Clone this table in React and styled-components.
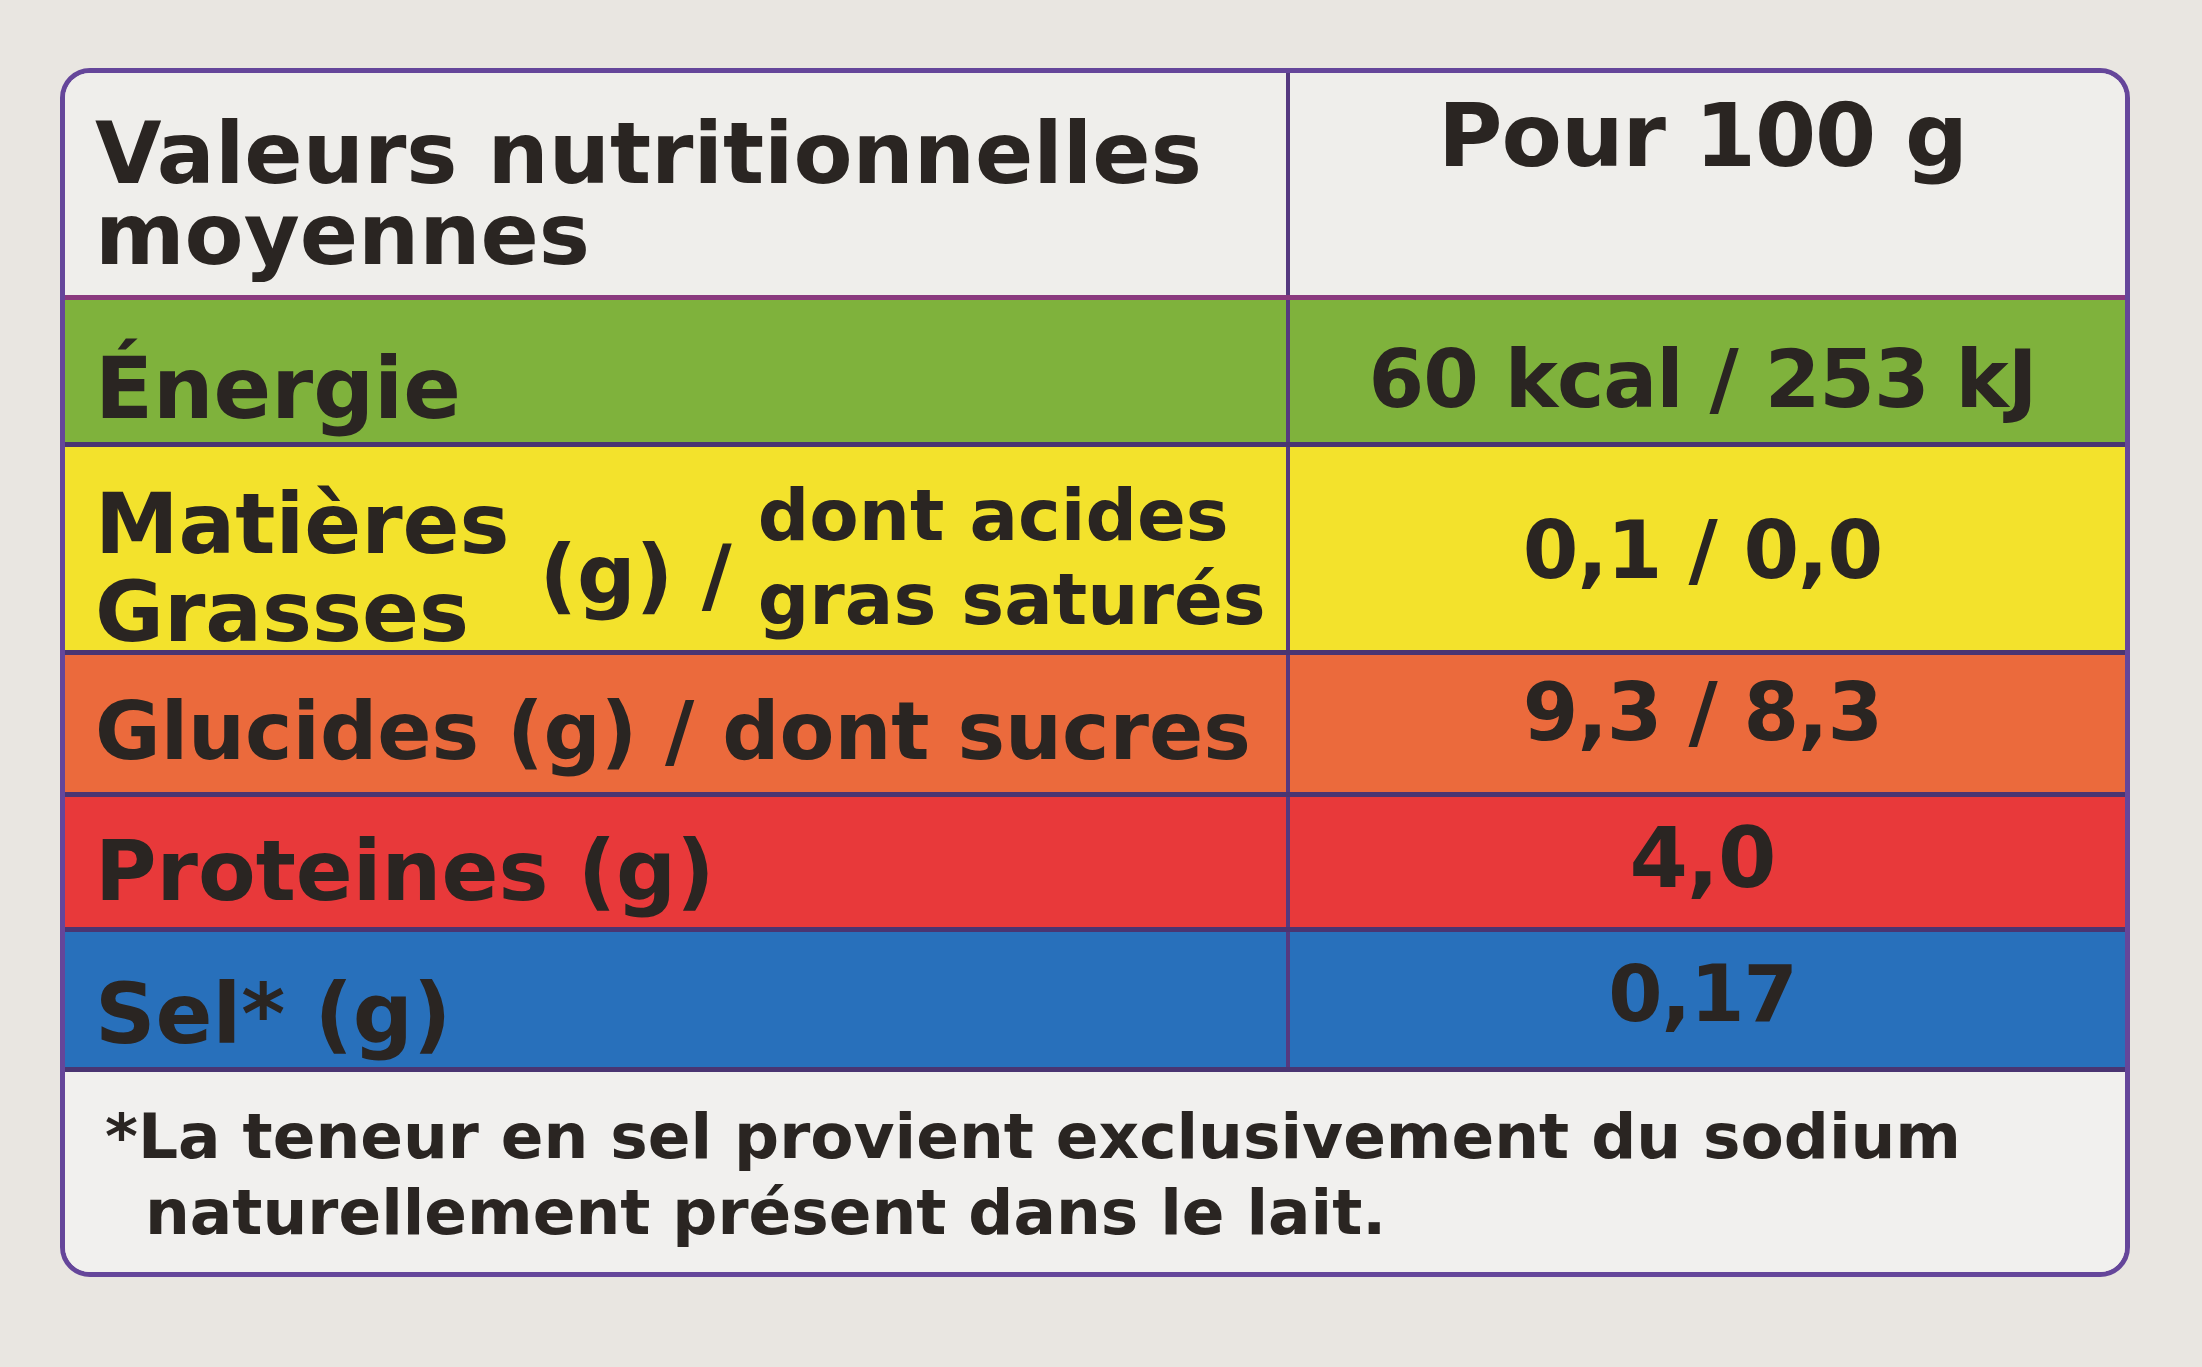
import React from "react";
import styled, { createGlobalStyle } from "styled-components";

const Global = createGlobalStyle`
  html, body { margin: 0; padding: 0; background: #e9e6e1; }
  body { font-family: "DejaVu Sans", "Open Sans", sans-serif; color: #2a2522; }
`;

const Page = styled.div`
  width: 2202px;
  height: 1367px;
  box-sizing: border-box;
  padding: 68px 0 0 60px;
  background: #e9e6e1;
`;

const Table = styled.div`
  width: 2070px;
  box-sizing: border-box;
  border: 5px solid #65469a;
  border-radius: 30px;
  overflow: hidden;
  display: flex;
  flex-direction: column;
  background: #efeeeb;
`;

const Row = styled.div`
  display: grid;
  grid-template-columns: 1225px 1fr;
  height: ${p => p.$h}px;
  box-sizing: border-box;
  background: ${p => p.$bg};
  border-top: ${p => (p.$first ? "none" : `5px solid ${p.$line || "#4a3572"}`)};
`;

const NoteRow = styled.div`
  height: ${p => p.$h}px;
  box-sizing: border-box;
  background: ${p => p.$bg};
  border-top: 5px solid #4a3572;
`;

const Label = styled.div`
  display: flex;
  align-items: flex-start;
  box-sizing: border-box;
  padding: ${p => p.$pad || 0}px 0 0 30px;
  border-right: 4px solid #55397f;
  font-weight: 700;
  font-size: ${p => p.$fs || 84}px;
  line-height: ${p => (p.$lh ? `${p.$lh}px` : 1)};
  white-space: nowrap;
`;

const Value = styled.div`
  display: flex;
  align-items: flex-start;
  justify-content: center;
  box-sizing: border-box;
  padding: ${p => p.$pad || 0}px 10px 0 0;
  font-weight: 700;
  font-size: ${p => p.$fs || 80}px;
  line-height: 1;
  letter-spacing: -1px;
  white-space: nowrap;
`;

const Stack = styled.div`
  display: flex;
  flex-direction: column;
  margin-top: ${p => p.$top}px;
  line-height: ${p => p.$lh}px;
  font-size: ${p => p.$fs}px;
`;

const Unit = styled.span`
  margin: ${p => p.$top}px 26px 0 30px;
  font-size: 82px;
  line-height: 1;
`;

const Footnote = styled.div`
  padding: 27px 40px 0 40px;
  font-weight: 700;
  font-size: 63px;
  line-height: 76px;
`;

const FootLine = styled.div`
  padding-left: ${p => p.$indent || 0}px;
  white-space: nowrap;
`;

export default function App() {
  return (
    <>
      <Global />
      <Page>
        <Table>
          <Row $first $h={222} $bg="#efeeeb">
            <Label $pad={40} $fs={86} $lh={81}>
              <span>
                Valeurs nutritionnelles
                <br />
                moyennes
              </span>
            </Label>
            <Value $pad={19} $fs={88}>Pour 100 g</Value>
          </Row>
          <Row $h={147} $bg="#7fb23c" $line="#8a3a7e">
            <Label $pad={46} $fs={85}>Énergie</Label>
            <Value $pad={40} $fs={80}>60 kcal / 253 kJ</Value>
          </Row>
          <Row $h={208} $bg="#f3e22c">
            <Label>
              <Stack $top={33} $lh={88} $fs={84}>
                <span>Matières</span>
                <span>Grasses</span>
              </Stack>
              <Unit $top={87}>(g) /</Unit>
              <Stack $top={26} $lh={84} $fs={72}>
                <span>dont acides</span>
                <span>gras saturés</span>
              </Stack>
            </Label>
            <Value $pad={64} $fs={80}>0,1 / 0,0</Value>
          </Row>
          <Row $h={142} $bg="#eb6a3c">
            <Label $pad={37} $fs={80}>Glucides (g) / dont sucres</Label>
            <Value $pad={18} $fs={80}>9,3 / 8,3</Value>
          </Row>
          <Row $h={135} $bg="#e8393a">
            <Label $pad={32} $fs={84}>Proteines (g)</Label>
            <Value $pad={19} $fs={84}>4,0</Value>
          </Row>
          <Row $h={140} $bg="#2870bb">
            <Label $pad={40} $fs={84}>Sel* (g)</Label>
            <Value $pad={23} $fs={78}>0,17</Value>
          </Row>
          <NoteRow $h={205} $bg="#f1f0ee">
            <Footnote>
              <FootLine>*La teneur en sel provient exclusivement du sodium</FootLine>
              <FootLine $indent={40}>naturellement présent dans le lait.</FootLine>
            </Footnote>
          </NoteRow>
        </Table>
      </Page>
    </>
  );
}
